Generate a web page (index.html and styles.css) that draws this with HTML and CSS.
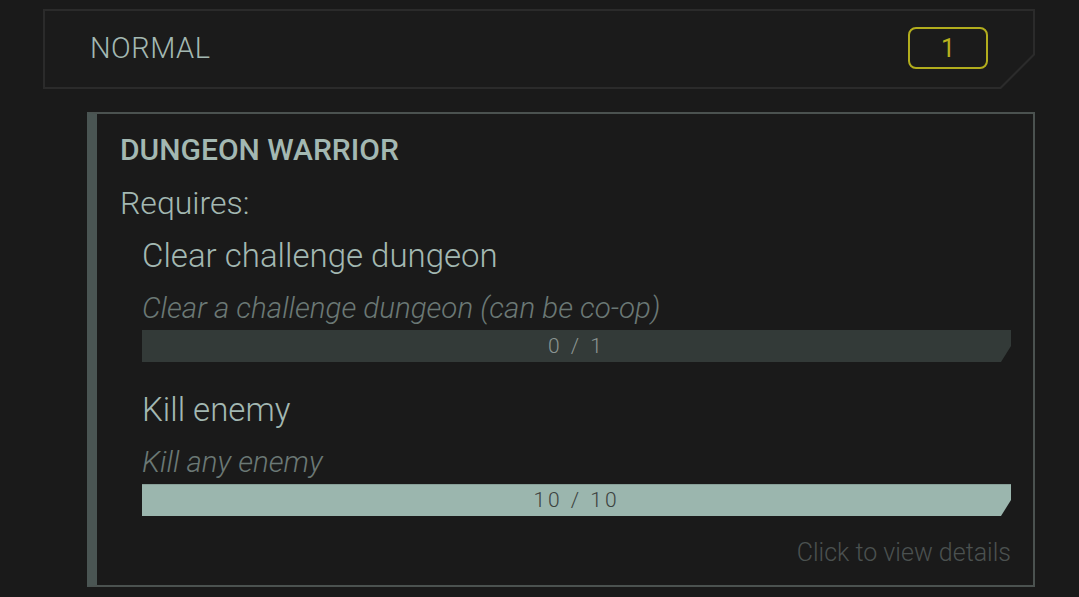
FILE: index.html
```html
<!DOCTYPE html>
<html lang="en">
<head>
    <meta charset="UTF-8">
    <title>Achievements</title>
    <link rel="stylesheet" href="styles.css">
</head>
<body>
    <div class="container">
        <div class="tier">
            <div class="tier-inner">
                <span class="tier-name">NORMAL</span>
                <span class="tier-count">1</span>
            </div>
        </div>

        <div class="card">
            <h2 class="card-title">DUNGEON WARRIOR</h2>
            <p class="requires">Requires:</p>

            <div class="req">
                <p class="req-name">Clear challenge dungeon</p>
                <p class="req-desc">Clear a challenge dungeon (can be co-op)</p>
                <div class="bar">0 / 1</div>
            </div>

            <div class="req">
                <p class="req-name">Kill enemy</p>
                <p class="req-desc">Kill any enemy</p>
                <div class="bar done">10 / 10</div>
            </div>

            <p class="details">Click to view details</p>
        </div>
    </div>
</body>
</html>
```

FILE: styles.css
```css
body {
    margin: 0;
    background-color: #1a1a1a;
    font-family: 'Roboto', sans-serif;
    font-weight: 300;
    color: #a3b8b2;
}
.container {
    padding: 9px 0 0 43px;
    width: 992px;
}
.tier {
    background-color: #2b2b2b;
    padding: 2px;
    height: 76px;
    clip-path: polygon(0 0, 100% 0, 100% calc(100% - 34px), calc(100% - 34px) 100%, 0 100%);
}
.tier-inner {
    height: 100%;
    background-color: #1b1b1b;
    display: flex;
    align-items: center;
    justify-content: space-between;
    padding: 0 45px 0 45px;
    clip-path: polygon(0 0, 100% 0, 100% calc(100% - 33px), calc(100% - 33px) 100%, 0 100%);
}
.tier-name {
    font-size: 29px;
    letter-spacing: 0.5px;
    margin-top: -2px;
}
.tier-count {
    width: 76px;
    height: 38px;
    border: 2px solid #b2ad1d;
    border-radius: 8px;
    color: #b8b21e;
    font-size: 25px;
    font-weight: 400;
    display: flex;
    align-items: center;
    justify-content: center;
    margin-top: -2px;
}
.card {
    margin: 23px 0 0 44px;
    border: 2px solid #4b5250;
    border-left: 10px solid #4a5553;
    padding: 16px 22px 16px 23px;
    height: 439px;
}
.card-title {
    margin: 0;
    font-size: 30px;
    font-weight: 500;
    line-height: 40px;
}
.requires {
    margin: 13px 0 0;
    font-size: 32px;
    line-height: 40px;
}
.req {
    margin-left: 22px;
    margin-top: 13px;
}
.req + .req {
    margin-top: 28px;
}
.req-name {
    margin: 0;
    font-size: 33px;
    line-height: 40px;
}
.req-desc {
    margin: 16px 0 0;
    font-size: 29.5px;
    font-style: italic;
    color: #6b7875;
    line-height: 32px;
}
.bar {
    margin-top: 6px;
    height: 32px;
    box-sizing: border-box;
    line-height: 32px;
    background-color: #333a38;
    color: #8b9592;
    text-align: center;
    font-size: 21px;
    letter-spacing: 3px;
    clip-path: polygon(0 0, 100% 0, 100% 50%, calc(100% - 10px) 100%, 0 100%);
}
.bar.done {
    background-color: #9bb6ae;
    color: #3b4240;
    line-height: 31px;
    border-top: 1px solid #879f98;
}
.details {
    margin: 22px 0 0;
    text-align: right;
    font-size: 25px;
    line-height: 30px;
    color: #4b5150;
}
```
